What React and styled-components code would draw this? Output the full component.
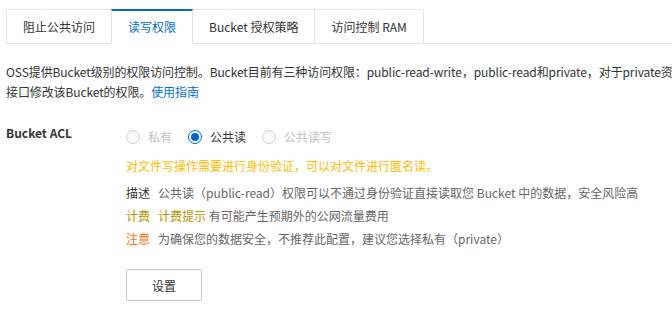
import React, { useState } from "react";
import styled, { createGlobalStyle, css } from "styled-components";

const Global = createGlobalStyle`
  html, body { margin: 0; padding: 0; background: #fff; overflow: hidden; }
  body { font-family: "Noto Sans CJK SC", "Noto Sans", sans-serif; font-size: 12px; color: #333; }
`;

const Page = styled.div`
  width: 672px;
  padding: 9px 0 0 6px;
  box-sizing: border-box;
`;

const TabBar = styled.div`
  display: flex;
  border-bottom: 1px solid #e3e4e6;
  height: 35px;
  box-sizing: border-box;
`;

const Tab = styled.div`
  padding: 0 16px;
  height: 35px;
  box-sizing: border-box;
  line-height: 33px;
  border: 1px solid #e3e4e6;
  margin-left: -1px;
  &:first-child { margin-left: 0; }
  color: #333;
  white-space: nowrap;
  background: #fff;
  cursor: pointer;
  ${(p) =>
    p.$active &&
    css`
      color: #0070cc;
      border-top: 2px solid #0070cc;
      border-bottom-color: #fff;
      line-height: 32px;
      position: relative;
      z-index: 1;
    `}
`;

const Intro = styled.p`
  margin: 18px 0 0;
  line-height: 20px;
  white-space: nowrap;
  color: #333;
  letter-spacing: -0.1px;
`;

const Link = styled.a`
  color: #0070cc;
  text-decoration: none;
`;

const FormRow = styled.div`
  display: flex;
  margin-top: 25px;
`;

const Label = styled.div`
  width: 120px;
  flex: none;
  font-weight: 600;
  color: #333;
  line-height: 20px;
  margin-top: -4px;
`;

const Content = styled.div`
  display: flex;
  flex-direction: column;
`;

const RadioGroup = styled.div`
  display: flex;
  gap: 16px;
  height: 20px;
  align-items: center;
`;

const RadioItem = styled.label`
  display: flex;
  align-items: center;
  gap: 8px;
  color: ${(p) => (p.$disabled ? "#c1c1c1" : "#333")};
  cursor: ${(p) => (p.$disabled ? "not-allowed" : "pointer")};
  line-height: 20px;
`;

const Circle = styled.span`
  width: 14px;
  height: 14px;
  box-sizing: border-box;
  border-radius: 50%;
  border: 1px solid ${(p) => (p.$checked ? "#0064c8" : "#d1d3d8")};
  background: ${(p) => (p.$checked ? "#fff" : "#f7f8fa")};
  display: flex;
  align-items: center;
  justify-content: center;
  ${(p) =>
    p.$checked &&
    css`
      border-width: 1.5px;
      &::after {
        content: "";
        width: 8px;
        height: 8px;
        border-radius: 50%;
        background: #0064c8;
      }
    `}
`;

const Warning = styled.div`
  color: #f9bd00;
  line-height: 20px;
  margin-top: 9px;
`;

const InfoList = styled.div`
  margin-top: 5px;
  display: flex;
  flex-direction: column;
`;

const InfoRow = styled.div`
  line-height: 23px;
  white-space: nowrap;
  color: #666;
`;

const InfoKey = styled.span`
  color: ${(p) => p.$color};
  margin-right: 8px;
`;

const Highlight = styled.span`
  color: #b99300;
`;

const Button = styled.button`
  margin-top: 19px;
  width: 76px;
  height: 32px;
  border: 1px solid #c4c6cc;
  border-radius: 2px;
  background: #fff;
  color: #333;
  font-family: inherit;
  font-size: 12px;
  cursor: pointer;
  padding: 0;
`;

const tabs = ["阻止公共访问", "读写权限", "Bucket 授权策略", "访问控制 RAM"];
const options = [
  { key: "private", label: "私有", disabled: true },
  { key: "public-read", label: "公共读" },
  { key: "public-read-write", label: "公共读写", disabled: true },
];

export default function App() {
  const [active, setActive] = useState(1);
  const [acl] = useState("public-read");
  return (
    <Page>
      <Global />
      <TabBar>
        {tabs.map((t, i) => (
          <Tab key={t} $active={i === active} onClick={() => setActive(i)}>
            {t}
          </Tab>
        ))}
      </TabBar>
      <Intro>
        OSS提供Bucket级别的权限访问控制。Bucket目前有三种访问权限：public-read-write，public-read和private，对于private资源
        <br />
        接口修改该Bucket的权限。<Link href="#">使用指南</Link>
      </Intro>
      <FormRow>
        <Label>Bucket ACL</Label>
        <Content>
          <RadioGroup>
            {options.map((o) => (
              <RadioItem key={o.key} $disabled={o.disabled}>
                <Circle $checked={acl === o.key} />
                {o.label}
              </RadioItem>
            ))}
          </RadioGroup>
          <Warning>对文件写操作需要进行身份验证，可以对文件进行匿名读。</Warning>
          <InfoList>
            <InfoRow>
              <InfoKey $color="#333">描述</InfoKey>
              公共读（public-read）权限可以不通过身份验证直接读取您 Bucket 中的数据，安全风险高
            </InfoRow>
            <InfoRow>
              <InfoKey $color="#b99300">计费</InfoKey>
              <Highlight>计费提示</Highlight> 有可能产生预期外的公网流量费用
            </InfoRow>
            <InfoRow>
              <InfoKey $color="#ff6a00">注意</InfoKey>
              为确保您的数据安全，不推荐此配置，建议您选择私有（private）
            </InfoRow>
          </InfoList>
          <div>
            <Button>设置</Button>
          </div>
        </Content>
      </FormRow>
    </Page>
  );
}
